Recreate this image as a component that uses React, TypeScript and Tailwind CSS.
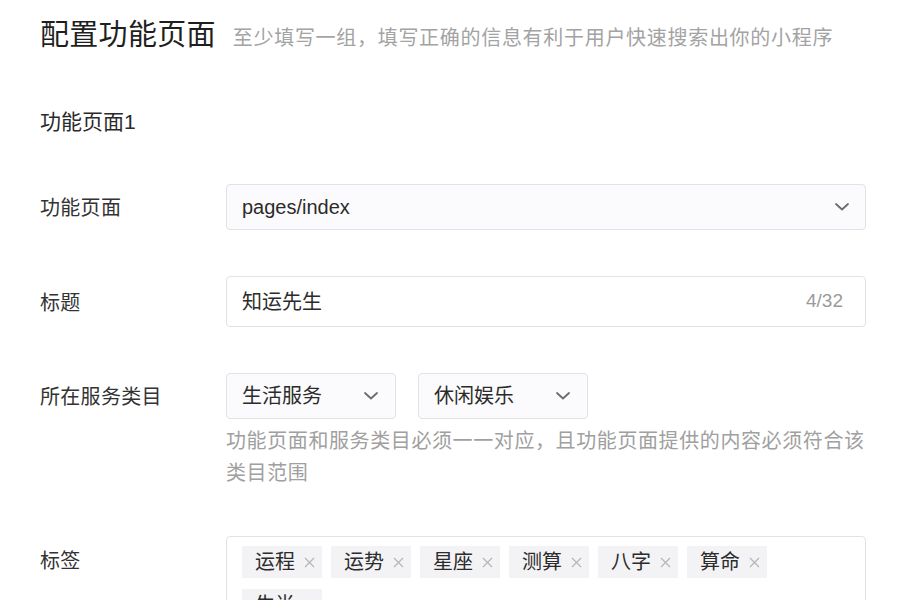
import { ReactNode } from "react";

const tags = ["运程", "运势", "星座", "测算", "八字", "算命", "生肖"];

function Chevron() {
  return (
    <svg width="16" height="10" viewBox="0 0 16 10" fill="none" className="shrink-0">
      <path d="M2 2l6 5.5L14 2" stroke="#6b6b6b" strokeWidth="1.8" strokeLinecap="round" strokeLinejoin="round" />
    </svg>
  );
}

function Row({ label, labelH, children, className = "" }: { label: string; labelH: string; children: ReactNode; className?: string }) {
  return (
    <div className={`flex items-start ${className}`}>
      <div className={`w-[186px] shrink-0 flex items-center pt-[2px] text-[20px] tracking-[0.3px] text-[#333] ${labelH}`}>{label}</div>
      <div className="flex-1">{children}</div>
    </div>
  );
}

export default function App() {
  return (
    <div
      className="w-[900px] h-[600px] overflow-hidden bg-white pl-[40px] pr-[34px] pt-[15px]"
      style={{ fontFamily: '"Liberation Sans", "Noto Sans CJK SC", sans-serif' }}
    >
      <div className="flex items-baseline h-[40px] leading-[40px]">
        <h1 className="text-[29px] tracking-[0.3px] text-[#1f1f1f] font-normal">配置功能页面</h1>
        <span className="ml-[17px] text-[20px] tracking-[0.7px] text-[#a3a3a3]">至少填写一组，填写正确的信息有利于用户快速搜索出你的小程序</span>
      </div>

      <div className="mt-[52px] h-[30px] leading-[30px] text-[21px] text-[#2a2a2a]">功能页面1</div>

      <Row label="功能页面" labelH="h-[46px]" className="mt-[47px]">
        <div className="h-[46px] w-[640px] rounded-[4px] border border-[#e2e2e6] bg-[#fbfbfd] flex items-center justify-between pl-[15px] pr-[15px]">
          <span className="text-[20px] text-[#2b2b2b]">pages/index</span>
          <Chevron />
        </div>
      </Row>

      <Row label="标题" labelH="h-[51px]" className="mt-[46px]">
        <div className="h-[51px] w-[640px] rounded-[4px] border border-[#e2e2e6] bg-white flex items-center justify-between pl-[15px] pr-[22px]">
          <span className="text-[20px] text-[#2b2b2b]">知运先生</span>
          <span className="text-[19px] text-[#9a9a9a]">4/32</span>
        </div>
      </Row>

      <Row label="所在服务类目" labelH="h-[46px]" className="mt-[46px]">
        <div className="flex gap-[22px]">
          {["生活服务", "休闲娱乐"].map((c) => (
            <div
              key={c}
              className="h-[46px] w-[170px] rounded-[4px] border border-[#e2e2e6] bg-[#fbfbfd] flex items-center justify-between pl-[15px] pr-[16px]"
            >
              <span className="text-[20px] text-[#2b2b2b]">{c}</span>
              <Chevron />
            </div>
          ))}
        </div>
        <p className="mt-[6px] w-[640px] text-[20px] tracking-[0.6px] leading-[32px] text-[#a0a0a0]">
          功能页面和服务类目必须一一对应，且功能页面提供的内容必须符合该类目范围
        </p>
      </Row>

      <Row label="标签" labelH="h-[48px]" className="mt-[47px]">
        <div className="w-[640px] rounded-[4px] border border-[#e2e2e6] bg-white pl-[15px] pr-[30px] pt-[9px] pb-[10px] flex flex-wrap gap-x-[9px] gap-y-[11px]">
          {tags.map((t) => (
            <div key={t} className="h-[32px] bg-[#f3f3f6] flex items-center pl-[13px] pr-[7px]">
              <span className="text-[20px] text-[#2b2b2b] leading-none">{t}</span>
              <span className="ml-[9px]">
                <svg width="11" height="11" viewBox="0 0 11 11" fill="none">
                  <path d="M1 1l9 9M10 1l-9 9" stroke="#b5b5b5" strokeWidth="1.2" />
                </svg>
              </span>
            </div>
          ))}
        </div>
      </Row>
    </div>
  );
}
